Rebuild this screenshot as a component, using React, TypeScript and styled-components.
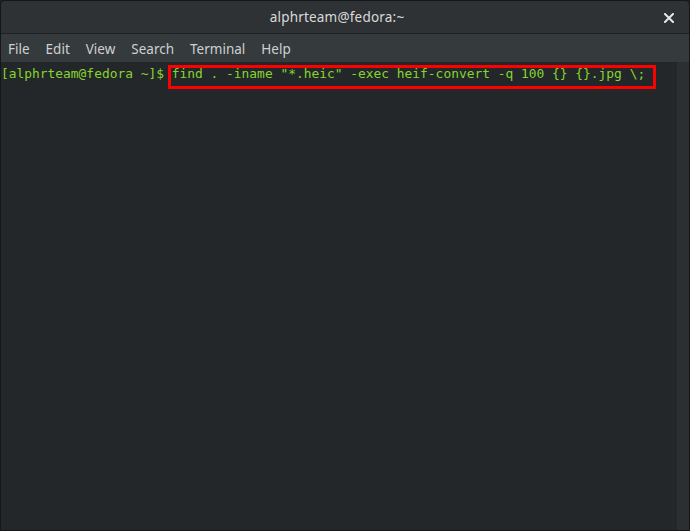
import React from "react";
import styled, { createGlobalStyle } from "styled-components";

const Global = createGlobalStyle`
  html, body { margin: 0; padding: 0; background: #1b1d1f; }
  * { box-sizing: border-box; }
`;

const Window = styled.div`
  width: 690px;
  height: 531px;
  display: flex;
  flex-direction: column;
  border: 1px solid #141617;
  border-radius: 5px 5px 0 0;
  overflow: hidden;
  background: #232729;
`;

const TitleBar = styled.div`
  height: 33px;
  flex: none;
  display: flex;
  align-items: center;
  justify-content: center;
  position: relative;
  padding-right: 16px;
  background: #2e3235;
  border-bottom: 1px solid #1e2123;
`;

const Title = styled.div`
  font-family: "Noto Sans", "DejaVu Sans", sans-serif;
  font-size: 13.5px;
  color: #dadada;
  letter-spacing: 0.2px;
`;

const CloseButton = styled.div`
  position: absolute;
  right: 14px;
  top: 11px;
  width: 12px;
  height: 12px;
  display: flex;
  align-items: center;
  justify-content: center;
`;

const MenuBar = styled.div`
  height: 28px;
  flex: none;
  display: flex;
  align-items: center;
  gap: 16px;
  padding: 2px 0 0 7px;
  background: #353a3d;
`;

const MenuItem = styled.span`
  font-family: "Noto Sans", "DejaVu Sans", sans-serif;
  font-size: 13.5px;
  color: #d0d0d0;
`;

const Body = styled.div`
  flex: 1;
  display: flex;
  min-height: 0;
`;

const Terminal = styled.div`
  flex: 1;
  padding: 3px 0 0 0;
  background: #232729;
`;

const Line = styled.div`
  font-family: "DejaVu Sans Mono", "Liberation Mono", monospace;
  font-size: 12.9px;
  line-height: 17px;
  color: #86d52d;
  white-space: pre;
`;

const Highlight = styled.span`
  position: relative;
  &::after {
    content: "";
    position: absolute;
    left: -4px;
    right: -11px;
    top: -1px;
    bottom: -8px;
    border: 3px solid #ff0000;
  }
`;

const Scrollbar = styled.div`
  width: 12px;
  flex: none;
  background: #2b2f32;
`;

export default function App() {
  const menus = ["File", "Edit", "View", "Search", "Terminal", "Help"];
  return (
    <>
      <Global />
      <Window>
        <TitleBar>
          <Title>alphrteam@fedora:~</Title>
          <CloseButton>
            <svg width="10" height="10" viewBox="0 0 10 10">
              <path d="M1 1 L9 9 M9 1 L1 9" stroke="#e6e6e6" strokeWidth="2" strokeLinecap="square" />
            </svg>
          </CloseButton>
        </TitleBar>
        <MenuBar>
          {menus.map((m) => (
            <MenuItem key={m}>{m}</MenuItem>
          ))}
        </MenuBar>
        <Body>
          <Terminal>
            <Line>
              {"[alphrteam@fedora ~]$ "}
              <Highlight>{'find . -iname "*.heic" -exec heif-convert -q 100 {} {}.jpg \\;'}</Highlight>
            </Line>
          </Terminal>
          <Scrollbar />
        </Body>
      </Window>
    </>
  );
}
